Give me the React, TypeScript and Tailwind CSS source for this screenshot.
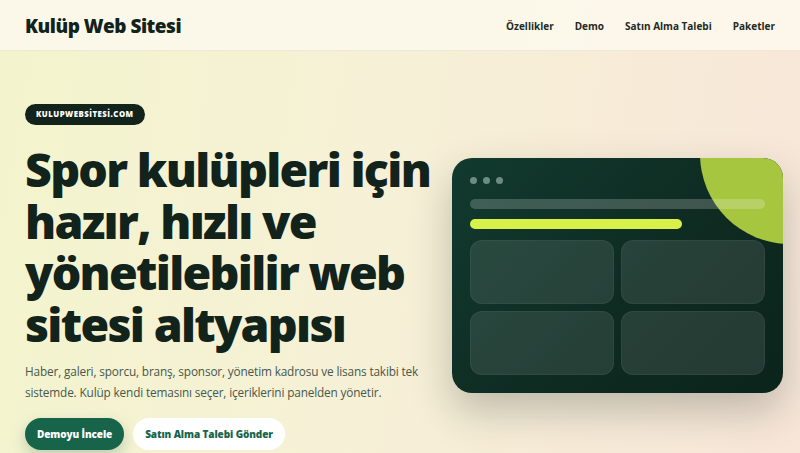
import React from "react";

export default function App() {
  return (
    <div
      className="w-[800px] h-[453px] overflow-hidden bg-[linear-gradient(100deg,#f3f4cd_0%,#f6f1d6_45%,#f8e6d9_100%)] text-[#12231c]"
      style={{ fontFamily: '"Open Sans", "Noto Sans", sans-serif' }}
    >
      <header className="h-[51px] flex items-center justify-between pl-[25px] pr-[25px] bg-[#fcf8ec]/90 border-b border-[#efe8d6]">
        <div className="text-[19px] font-extrabold tracking-[-0.5px] text-[#12231c] pt-[2px]">Kulüp Web Sitesi</div>
        <nav className="flex items-center gap-[21px] text-[10px] font-bold text-[#1f2a24] pt-[2px]">
          <a>Özellikler</a>
          <a>Demo</a>
          <a>Satın Alma Talebi</a>
          <a>Paketler</a>
        </nav>
      </header>

      <main className="flex items-start pl-[25px] pt-[53px]">
        <section className="w-[420px] shrink-0 flex flex-col">
          <div className="self-start h-[21px] px-[11px] rounded-full bg-[#12231c] text-white text-[7.8px] font-extrabold tracking-[0.5px] flex items-center">
            KULUPWEBSİTESİ.COM
          </div>
          <h1 className="mt-[19px] text-[46.5px] leading-[51.5px] font-extrabold tracking-[-1.7px] text-[#12231c]">
            Spor kulüpleri için hazır, hızlı ve yönetilebilir web sitesi altyapısı
          </h1>
          <p className="mt-[11px] w-[400px] text-[11.8px] leading-[21px] tracking-[-0.15px] text-[#47574d]">
            Haber, galeri, sporcu, branş, sponsor, yönetim kadrosu ve lisans takibi tek sistemde. Kulüp kendi temasını seçer, içeriklerini panelden yönetir.
          </p>
          <div className="mt-[15px] flex gap-[9px]">
            <button className="h-[32px] px-[12px] rounded-full bg-[#17644b] text-white text-[10px] font-extrabold tracking-[-0.1px] shadow-[0_6px_14px_rgba(23,100,75,0.25)]">
              Demoyu İncele
            </button>
            <button className="h-[32px] px-[12px] rounded-full bg-white text-[#17644b] text-[10px] font-extrabold tracking-[-0.1px]">
              Satın Alma Talebi Gönder
            </button>
          </div>
        </section>

        <div className="ml-[7px] mt-[54px] shrink-0 relative w-[331px] h-[235px] rounded-[20px] overflow-hidden bg-[linear-gradient(135deg,#123a2e_0%,#0e2a21_60%,#0b241c_100%)] shadow-[0_18px_40px_rgba(20,40,30,0.25)]">
          <div className="absolute -top-[94px] -right-[97px] w-[180px] h-[180px] rounded-full bg-[#a6c640]" />
          <div className="relative px-[18px] pt-[19px] flex flex-col">
            <div className="flex gap-[6px]">
              <span className="w-[7px] h-[7px] rounded-full bg-[#6e8b81]" />
              <span className="w-[7px] h-[7px] rounded-full bg-[#6e8b81]" />
              <span className="w-[7px] h-[7px] rounded-full bg-[#6e8b81]" />
            </div>
            <div className="mt-[15px] h-[10px] rounded-full bg-white/20" />
            <div className="mt-[10px] h-[10px] w-[212px] rounded-full bg-[#d8f04a]" />
            <div className="mt-[11px] grid grid-cols-2 gap-[7px]">
              <div className="h-[64px] rounded-[12px] bg-white/10 border border-white/5" />
              <div className="h-[64px] rounded-[12px] bg-white/10 border border-white/5" />
              <div className="h-[64px] rounded-[12px] bg-white/10 border border-white/5" />
              <div className="h-[64px] rounded-[12px] bg-white/10 border border-white/5" />
            </div>
          </div>
        </div>
      </main>
    </div>
  );
}
